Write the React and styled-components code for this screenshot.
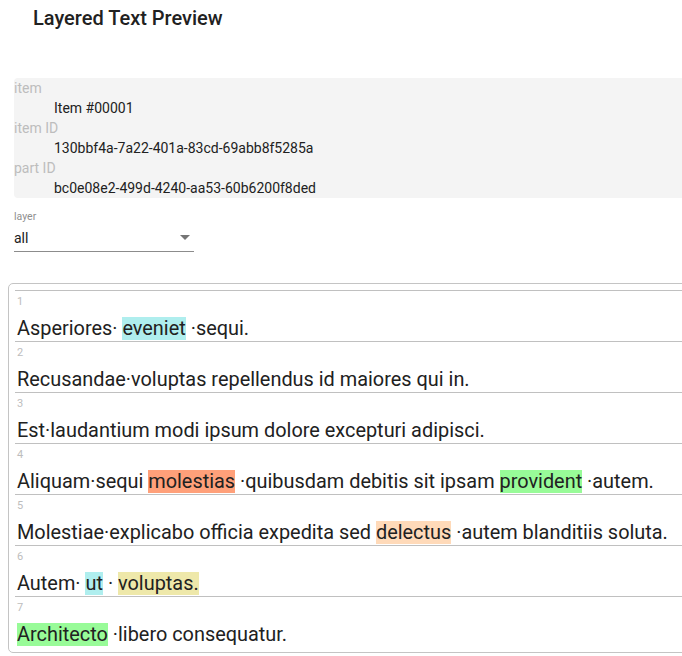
import React from 'react'
import styled, { createGlobalStyle } from 'styled-components'

const GlobalStyle = createGlobalStyle`
  html, body {
    margin: 0;
    padding: 0;
    overflow: hidden;
    background: #fff;
  }
  body {
    font-family: Roboto, "Noto Sans", "Liberation Sans", sans-serif;
    color: #212121;
  }
`;

const Page = styled.div`
  display: flex;
  flex-direction: column;
  width: 100%;
`;

const Title = styled.h1`
  margin: 2px 0 0 33px;
  font-size: 20px;
  font-weight: 500;
  line-height: 32px;
  color: #212121;
`;

const InfoList = styled.dl`
  margin: 44px 0 0 14px;
  background: #f4f4f4;
  border-radius: 4px 0 0 4px;
  font-size: 14px;
  line-height: 20px;
`;

const InfoLabel = styled.dt`
  color: #bdbdbd;
`;

const InfoValue = styled.dd`
  margin: 0 0 0 40px;
  color: #212121;
`;

const Field = styled.div`
  margin: 13px 0 0 14px;
  width: 180px;
`;

const FieldLabel = styled.label`
  display: block;
  font-size: 10.5px;
  line-height: 12px;
  color: #8f8f8f;
`;

const SelectBox = styled.div`
  position: relative;
  margin-top: 5px;
  padding: 0 0 3px;
  font-size: 14px;
  line-height: 20px;
  border-bottom: 1px solid #8c8c8c;
  cursor: pointer;
`;

const Arrow = styled.svg`
  position: absolute;
  right: 4px;
  top: 7px;
  width: 10px;
  height: 5px;
  fill: #757575;
`;

const Card = styled.div`
  margin: 31px -24px 0 8px;
  border: 1px solid #c4c4c4;
  border-radius: 5px;
  padding: 6px 6px 5px 6px;
`;

const Row = styled.div`
  display: flex;
  flex-direction: column;
  border-top: 1px solid #c0c0c0;
  padding: 3px 0 0 2px;
`;

const RowNumber = styled.div`
  font-size: 11px;
  line-height: 16px;
  color: #bdbdbd;
`;

const RowText = styled.div`
  margin-top: 7px;
  font-size: 19.9px;
  line-height: 24px;
  white-space: nowrap;
  color: #212121;
`;

const Mark = styled.span`
  background: ${p => p.$color};
`;

const colors = {
  cyan: '#afeeee',
  salmon: '#ffa07a',
  green: '#98fb98',
  peach: '#ffdab9',
  gold: '#eee8aa',
}

const info = [
  ['item', 'Item #00001'],
  ['item ID', '130bbf4a-7a22-401a-83cd-69abb8f5285a'],
  ['part ID', 'bc0e08e2-499d-4240-aa53-60b6200f8ded'],
]

// each row: list of fragments, a fragment with a color is highlighted
const rows = [
  [{ t: 'Asperiores·' }, { t: 'eveniet', c: 'cyan' }, { t: '·sequi.' }],
  [{ t: 'Recusandae·voluptas repellendus id maiores qui in.' }],
  [{ t: 'Est·laudantium modi ipsum dolore excepturi adipisci.' }],
  [
    { t: 'Aliquam·sequi' },
    { t: 'molestias', c: 'salmon' },
    { t: '·quibusdam debitis sit ipsam' },
    { t: 'provident', c: 'green' },
    { t: '·autem.' },
  ],
  [
    { t: 'Molestiae·explicabo officia expedita sed' },
    { t: 'delectus', c: 'peach' },
    { t: '·autem blanditiis soluta.' },
  ],
  [{ t: 'Autem·' }, { t: 'ut', c: 'cyan' }, { t: '·' }, { t: 'voluptas.', c: 'gold' }],
  [{ t: 'Architecto', c: 'green' }, { t: '·libero consequatur.' }],
]

const App = () => {
  return (
    <Page>
      <GlobalStyle />
      <Title>Layered Text Preview</Title>

      <InfoList>
        {info.map(([label, value]) => (
          <React.Fragment key={label}>
            <InfoLabel>{label}</InfoLabel>
            <InfoValue>{value}</InfoValue>
          </React.Fragment>
        ))}
      </InfoList>

      <Field>
        <FieldLabel>layer</FieldLabel>
        <SelectBox>
          all
          <Arrow viewBox="0 0 10 5">
            <path d="M0 0l5 5 5-5z" />
          </Arrow>
        </SelectBox>
      </Field>

      <Card>
        {rows.map((frags, i) => (
          <Row key={i}>
            <RowNumber>{i + 1}</RowNumber>
            <RowText>
              {frags.map((f, j) => (
                <React.Fragment key={j}>
                  {j > 0 && ' '}
                  {f.c ? <Mark $color={colors[f.c]}>{f.t}</Mark> : f.t}
                </React.Fragment>
              ))}
            </RowText>
          </Row>
        ))}
      </Card>
    </Page>
  )
}

export default App
